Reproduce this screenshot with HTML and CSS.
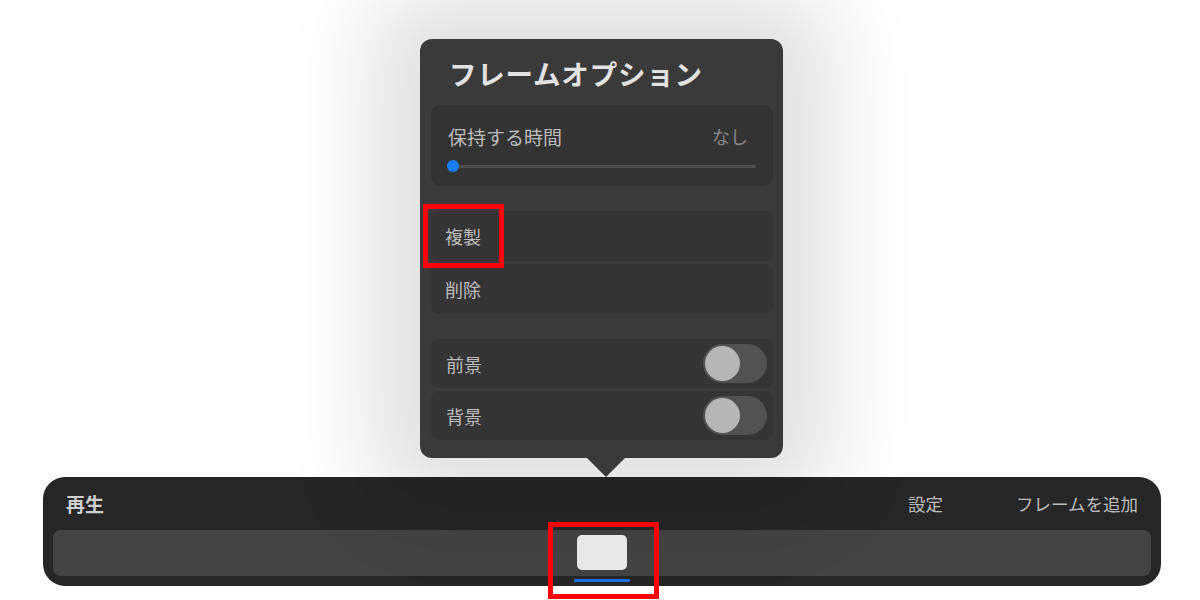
FILE: index.html
```html
<!doctype html>
<html lang="ja">
<head>
    <meta charset="UTF-8">
    <title>フレームオプション</title>
    <link rel="stylesheet" href="styles.css">
</head>
<body>
    <div class="stage">
        <!-- ポップオーバー -->
        <div class="popover">
            <div class="popover-title">フレームオプション</div>

            <div class="hold-section">
                <div class="hold-header">
                    <span class="hold-label">保持する時間</span>
                    <span class="hold-value">なし</span>
                </div>
                <div class="slider">
                    <div class="slider-knob"></div>
                </div>
            </div>

            <div class="row-group">
                <div class="row">複製</div>
                <div class="row">削除</div>
            </div>

            <div class="row-group">
                <div class="row">前景
                    <div class="toggle"><div class="toggle-knob"></div></div>
                </div>
                <div class="row">背景
                    <div class="toggle"><div class="toggle-knob"></div></div>
                </div>
            </div>

            <div class="popover-arrow"></div>
            <div class="highlight highlight-duplicate"></div>
        </div>

        <!-- タイムライン -->
        <div class="timeline">
            <div class="timeline-header">
                <span class="timeline-play">再生</span>
                <div class="timeline-actions">
                    <span>設定</span>
                    <span>フレームを追加</span>
                </div>
            </div>
            <div class="timeline-strip">
                <div class="frame">
                    <div class="frame-thumb"></div>
                    <div class="frame-underline"></div>
                    <div class="highlight highlight-frame"></div>
                </div>
            </div>
        </div>
    </div>
</body>
</html>
```

FILE: styles.css
```css
html,
body {
    margin: 0;
    padding: 0;
    background: #fff;
}

body {
    width: 1200px;
    height: 600px;
    overflow: hidden;
    font-family: "Noto Sans CJK JP", "Noto Sans", sans-serif;
}

.stage {
    display: flex;
    flex-direction: column;
    padding-top: 39px;
}

.popover {
    position: relative;
    box-sizing: border-box;
    width: 363px;
    height: 419px;
    margin-left: 420px;
    padding: 0 10px 0 11px;
    background-color: #3a3a3a;
    border-radius: 12px;
    box-shadow: 0 0 90px 45px rgba(0, 0, 0, 0.13);
}

.popover-title {
    height: 66px;
    padding-left: 18px;
    line-height: 68px;
    color: #e2e2e2;
    font-size: 27.5px;
    font-weight: bold;
    letter-spacing: 0.8px;
}

.hold-section {
    box-sizing: border-box;
    height: 81px;
    padding: 11px 17px 0 17px;
    background-color: #333;
    border-radius: 10px;
}

.hold-header {
    display: flex;
    justify-content: space-between;
    align-items: center;
    height: 40px;
}

.hold-label {
    color: #bcbcbc;
    font-size: 19px;
}

.hold-value {
    padding-right: 8px;
    color: #888;
    font-size: 18px;
}

.slider {
    position: relative;
    height: 3px;
    margin: 9px 0 0 5px;
    background-color: #4e4e4e;
    border-radius: 2px;
}

/* 0 の位置のつまみ */
.slider-knob {
    position: absolute;
    left: -6px;
    top: -5px;
    width: 12px;
    height: 12px;
    border-radius: 50%;
    background-color: #1a7ef5;
}

.row-group {
    display: flex;
    flex-direction: column;
    gap: 3px;
    margin-top: 25px;
}

.row {
    display: flex;
    justify-content: space-between;
    align-items: center;
    height: 50px;
    padding: 0 6px 0 14px;
    background-color: #353535;
    border-radius: 8px;
    color: #bdbdbd;
    font-size: 18px;
}

.row-group + .row-group .row {
    height: 49px;
    padding-left: 15px;
}

.toggle {
    box-sizing: border-box;
    width: 64px;
    height: 39px;
    padding: 2px;
    border-radius: 20px;
    background-color: #525252;
}

.toggle-knob {
    width: 35px;
    height: 35px;
    border-radius: 50%;
    background-color: #b6b6b6;
}

.popover-arrow {
    position: absolute;
    left: 167px;
    bottom: -19px;
    width: 0;
    height: 0;
    border-left: 19px solid transparent;
    border-right: 19px solid transparent;
    border-top: 19px solid #3a3a3a;
}

.highlight {
    position: absolute;
    box-sizing: border-box;
    border: 5px solid #f00;
}

.highlight-duplicate {
    left: 3px;
    top: 165px;
    width: 81px;
    height: 64px;
}

.timeline {
    box-sizing: border-box;
    width: 1118px;
    height: 109px;
    margin: 19px 0 0 43px;
    padding: 0 10px 10px;
    background-color: #262626;
    border-radius: 22px;
}

.timeline-header {
    display: flex;
    justify-content: space-between;
    align-items: center;
    height: 53px;
    padding: 0 13px;
    color: #bdbdbd;
    font-size: 17.5px;
}

.timeline-play {
    font-size: 19px;
    font-weight: bold;
    color: #cfcfcf;
}

.timeline-actions {
    display: flex;
    gap: 73px;
}

.timeline-strip {
    display: flex;
    justify-content: center;
    height: 46px;
    background-color: #434343;
    border-radius: 8px;
}

.frame {
    position: relative;
    display: flex;
    flex-direction: column;
    align-items: center;
    width: 56px;
    height: 46px;
    padding-top: 5px;
    box-sizing: border-box;
}

.frame-thumb {
    flex-shrink: 0;
    width: 50px;
    height: 35px;
    background-color: #e8e8e8;
    border-radius: 5px;
}

.frame-underline {
    flex-shrink: 0;
    width: 56px;
    height: 3px;
    margin-top: 9px;
    background-color: #1a6fe0;
    border-radius: 1px;
}

.highlight-frame {
    left: -26px;
    top: -8px;
    width: 111px;
    height: 77px;
}
```
